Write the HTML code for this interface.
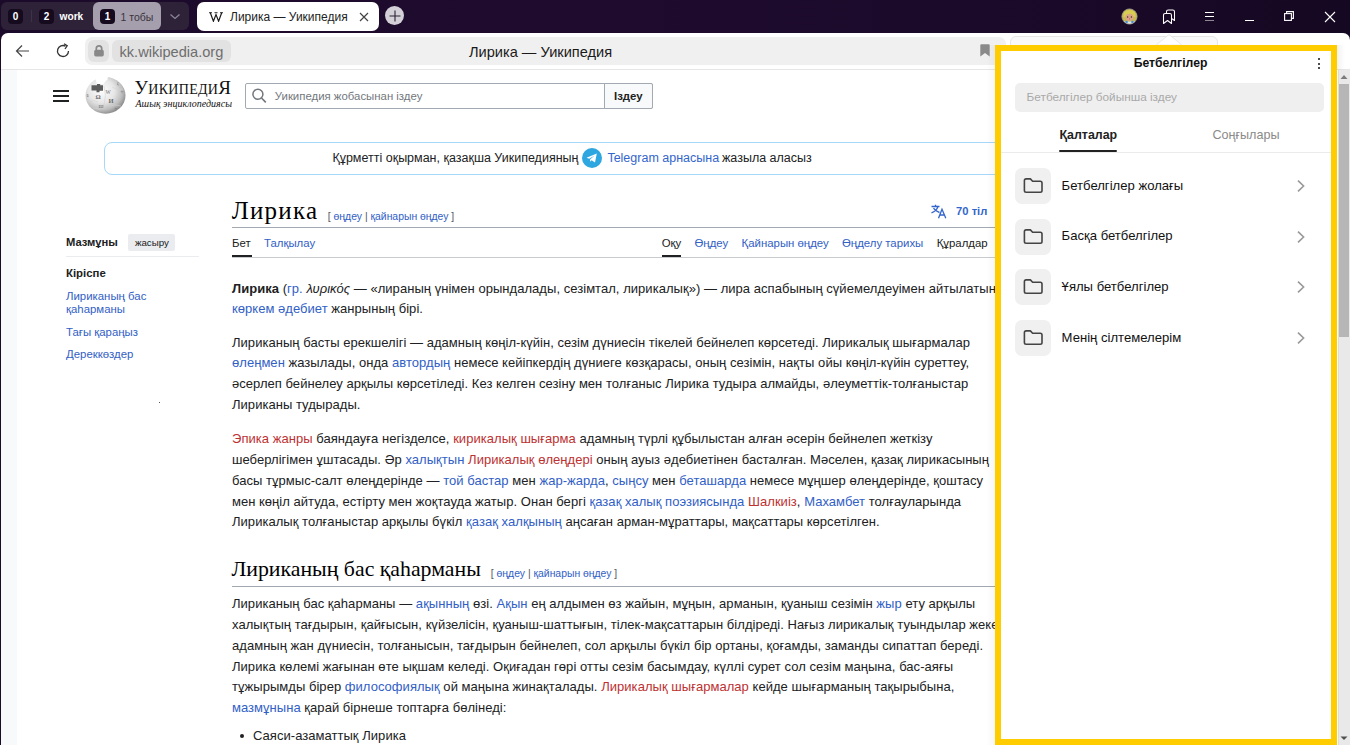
<!DOCTYPE html>
<html><head><meta charset="utf-8">
<style>
*{box-sizing:border-box;margin:0;padding:0}
html,body{width:1350px;height:745px;overflow:hidden;background:linear-gradient(to right,#1c0a2b 0%,#1e0b2e 40%,#1c0a2b 70%,#150822 100%);font-family:"Liberation Sans",sans-serif;color:#202122;position:relative}
.a{position:absolute}
a{color:#3160c6;text-decoration:none}
.rd{color:#bd3131}
.badge{position:absolute;top:9px;width:15px;height:15px;background:#160a1f;border-radius:4px;color:#fff;font-size:10px;font-weight:bold;text-align:center;line-height:16px}
.ln{position:absolute;left:232px;white-space:nowrap;font-size:13px;line-height:16px}
</style></head><body>
<!-- TAB BAR -->
<div class="a" style="left:1px;top:2px;width:188px;height:28px;background:#2e2239;border-radius:6px"></div>
<div class="badge" style="left:8px">0</div>
<div class="a" style="left:30.5px;top:10px;width:1px;height:12px;background:#3d3248"></div>
<div class="badge" style="left:39px">2</div>
<div class="a" style="left:59.5px;top:9px;color:#fff;font-size:10.2px;font-weight:bold;line-height:16px">work</div>
<svg class="a" style="left:168px;top:12px" width="14" height="9" viewBox="0 0 14 9"><path d="M2.5 2.5 L7 6.5 L11.5 2.5" fill="none" stroke="#8c8496" stroke-width="1.3"/></svg>
<div class="a" style="left:93px;top:2px;width:68px;height:28px;background:#a59fad;border-radius:6px"></div>
<div class="badge" style="left:100px">1</div>
<div class="a" style="left:120.5px;top:9px;color:#3a3340;font-size:10.5px;line-height:16px">1 тобы</div>
<div class="a" style="left:197px;top:2px;width:182px;height:28.5px;background:#fff;border-radius:7px"></div>
<svg class="a" style="left:209px;top:12px" width="14" height="10" viewBox="0 0 14 10"><path d="M1.3 0.8L4.4 9.2L7 2.6L9.6 9.2L12.7 0.8" fill="none" stroke="#1a1a1a" stroke-width="1.2" stroke-linejoin="miter"/><path d="M0 0.7H3M5.5 0.7H8.5M11 0.7H14" stroke="#1a1a1a" stroke-width="0.9"/></svg>
<div class="a" style="left:230px;top:9px;font-size:12px;line-height:16px;color:#222">Лирика — Уикипедия</div>
<svg class="a" style="left:358.5px;top:11.5px" width="10" height="10" viewBox="0 0 10 10"><path d="M1 1L9 9M9 1L1 9" stroke="#444" stroke-width="1.2"/></svg>
<div class="a" style="left:384.5px;top:5.8px;width:19.5px;height:19.5px;border-radius:50%;background:#d4d0d8"></div>
<svg class="a" style="left:384.5px;top:5.8px" width="20" height="20" viewBox="0 0 20 20"><path d="M10 4.5V15.5M4.5 10H15.5" stroke="#2a2333" stroke-width="1.1"/></svg>

<!-- right tab-bar icons -->
<svg class="a" style="left:1121px;top:8px" width="17" height="17" viewBox="0 0 17 17"><defs><clipPath id="avc"><circle cx="8.5" cy="8.5" r="7.3"/></clipPath></defs><circle cx="8.5" cy="8.5" r="7.6" fill="#c4bb4a" stroke="#a8a39a" stroke-width="0.8"/><g clip-path="url(#avc)"><path d="M3 4Q8.5 0 14 4L14.5 9H2.5Z" fill="#d8cf52"/><ellipse cx="8.5" cy="9.3" rx="4.2" ry="3.6" fill="#d9a585"/><circle cx="6.6" cy="9" r="0.7" fill="#3a2a2a"/><circle cx="10.4" cy="9" r="0.7" fill="#3a2a2a"/><circle cx="8.5" cy="10.8" r="0.6" fill="#d0507a"/><path d="M3 13.5H14V17H3Z" fill="#d8e4ee"/><circle cx="5.5" cy="14" r="1.3" fill="#4a8ad8"/><circle cx="11.5" cy="14" r="1.3" fill="#4a8ad8"/></g></svg>
<svg class="a" style="left:1160px;top:8px" width="18" height="18" viewBox="0 0 18 18"><path d="M3.5 15.5V7.2Q3.5 5.5 5.2 5.5H9.8Q11.5 5.5 11.5 7.2V15.5L7.5 12.5Z" fill="none" stroke="#fff" stroke-width="1.05" stroke-linejoin="round"/><path d="M6.5 5.5V3.8Q6.5 2 8.2 2H12.8Q14.5 2 14.5 3.8V12.5L11.5 10.5" fill="none" stroke="#fff" stroke-width="1.05" stroke-linejoin="round"/></svg>
<div class="a" style="left:1204.5px;top:11.7px;width:9px;height:1.3px;background:#fff"></div>
<div class="a" style="left:1204.5px;top:15.7px;width:9px;height:1.3px;background:#fff"></div>
<div class="a" style="left:1204.5px;top:19.5px;width:9px;height:1.5px;background:#8e8796"></div>
<div class="a" style="left:1244.7px;top:20px;width:9.5px;height:1.2px;background:#fff"></div>
<svg class="a" style="left:1283px;top:10px" width="12" height="12" viewBox="0 0 12 12"><rect x="1.6" y="3.6" width="6.8" height="6.8" fill="none" stroke="#fff" stroke-width="1.1"/><path d="M3.6 3.6V1.6H10.4V8.4H8.4" fill="none" stroke="#fff" stroke-width="1.1"/></svg>
<svg class="a" style="left:1323.5px;top:10.5px" width="12" height="12" viewBox="0 0 12 12"><path d="M1 1L11 11M11 1L1 11" stroke="#fff" stroke-width="1.1"/></svg>

<!-- WINDOW -->
<div class="a" style="left:1px;top:32.5px;width:1349px;height:713px;background:#fff;border-radius:7px 7px 0 0"></div>
<div class="a" style="left:1px;top:69px;width:1349px;height:1px;background:#e6e6e6"></div>
<svg class="a" style="left:14px;top:43px" width="16" height="16" viewBox="0 0 16 16"><path d="M15 8H2.5M8 2.5L2.5 8L8 13.5" fill="none" stroke="#444" stroke-width="1.2"/></svg>
<svg class="a" style="left:55px;top:43px" width="16" height="16" viewBox="0 0 16 16"><path d="M13.5 8A5.5 5.5 0 1 1 10.5 3.1" fill="none" stroke="#333" stroke-width="1.3"/><path d="M9 0.8L12.2 2.8L10 6" fill="none" stroke="#333" stroke-width="1.3"/></svg>
<div class="a" style="left:84.5px;top:36.5px;width:921px;height:28.5px;background:#f0f0f0;border-radius:7px"></div>
<div class="a" style="left:88px;top:40px;width:21px;height:22px;background:#e2e2e2;border-radius:6px"></div>
<svg class="a" style="left:92.5px;top:44px" width="12" height="14" viewBox="0 0 12 14"><rect x="1.2" y="5.8" width="9.6" height="6.6" rx="1.6" fill="#888"/><path d="M3.3 6.5V4.6A2.7 2.7 0 0 1 8.7 4.6V6.5" fill="none" stroke="#888" stroke-width="1.7"/></svg>
<div class="a" style="left:112.4px;top:40px;width:119px;height:22px;background:#e2e2e2;border-radius:6px"></div>
<div class="a" style="left:119.5px;top:42.5px;font-size:14.6px;line-height:19px;color:#6e6e6e">kk.wikipedia.org</div>
<div class="a" style="left:469px;top:43px;font-size:14.6px;line-height:19px;color:#1a1a1a">Лирика — Уикипедия</div>
<svg class="a" style="left:979.5px;top:44px" width="10" height="13" viewBox="0 0 10 13"><path d="M0.3 1.3Q0.3 0.3 1.3 0.3H8.7Q9.7 0.3 9.7 1.3V12.5L5 9L0.3 12.5Z" fill="#8a8a8a"/></svg>

<!-- PAGE -->
<div class="a" style="left:1px;top:70px;width:16px;height:675px;background:#f8f9fa"></div>
<div class="a" style="left:53px;top:90px;width:15.5px;height:2px;background:#202122"></div>
<div class="a" style="left:53px;top:95px;width:15.5px;height:2px;background:#202122"></div>
<div class="a" style="left:53px;top:100px;width:15.5px;height:2px;background:#202122"></div>
<svg class="a" style="left:84px;top:76px" width="44" height="40" viewBox="0 0 44 40"><defs><radialGradient id="gg" cx="0.4" cy="0.38" r="0.65"><stop offset="0" stop-color="#fdfdfd"/><stop offset="0.5" stop-color="#e6e6e6"/><stop offset="0.8" stop-color="#bdbdbd"/><stop offset="1" stop-color="#8a8a8a"/></radialGradient></defs>
<ellipse cx="21.5" cy="19.4" rx="20" ry="18.3" fill="url(#gg)"/>
<path d="M11.5 0.5L24 0.5L23.5 3.5Q21 5 19.5 8L13 8.5Q12 5 11.5 0.5Z" fill="#fff"/>
<path d="M7.5 9.3H13V8H16.2V9.2H19V14.8H15.5V16.3H12.5V14.6H7.5Z" fill="#5c5c5c"/>
<g font-family="Liberation Serif,serif" fill="#6a6a6a"><text x="11.5" y="23" font-size="6.5" font-weight="bold">Ω</text><text x="21.5" y="17.5" font-size="5.5">W</text><text x="24.5" y="27" font-size="6.5" font-weight="bold">И</text><text x="14.5" y="31.5" font-size="5">Ш</text><text x="2.5" y="21" font-size="4">Б</text><text x="33" y="8.5" font-size="4">ζ</text><text x="36" y="17" font-size="4">ャ</text><text x="30" y="34" font-size="4">ヶ</text></g>
<path d="M4 26Q10 23 14 26M20 10Q23 19 20 29M28 11Q33 15 39 13M9 32Q15 34 21 32M26 30Q31 28 37 30" fill="none" stroke="#d2d2d2" stroke-width="0.6"/></svg>
<div class="a" style="left:134.5px;top:77.5px;font-family:'Liberation Serif',serif;font-size:19px;line-height:20px;color:#111;letter-spacing:0.3px;white-space:nowrap">У<span style="font-size:14px">ИКИПЕДИ</span>Я</div>
<div class="a" style="left:135.5px;top:98px;font-family:'Liberation Serif',serif;font-style:italic;font-size:10px;line-height:12px;color:#111">Ашық энциклопедиясы</div>
<div class="a" style="left:244.6px;top:82.6px;width:408px;height:26px;border:1px solid #a2a9b1;border-radius:2px;background:#fff"></div>
<svg class="a" style="left:250px;top:87px" width="18" height="18" viewBox="0 0 18 18"><circle cx="7.9" cy="7.3" r="5" fill="none" stroke="#72777d" stroke-width="1.5"/><path d="M11.5 11L15.8 15.4" stroke="#72777d" stroke-width="1.6"/></svg>
<div class="a" style="left:274.8px;top:89px;font-size:11.4px;line-height:14px;color:#72777d;white-space:nowrap">Уикипедия жобасынан іздеу</div>
<div class="a" style="left:604px;top:82.6px;width:48.6px;height:26px;border:1px solid #a2a9b1;border-radius:0 2px 2px 0;background:#f8f9fa;font-size:11.4px;font-weight:bold;line-height:24px;text-align:center;color:#202122">Іздеу</div>

<div class="a" style="left:104.4px;top:142.4px;width:1230px;height:33px;border:1px solid #a7d7f9;border-radius:8px"></div>
<div class="a" style="left:332.4px;top:150px;font-size:12.5px;line-height:16px;white-space:nowrap">Құрметті оқырман, қазақша Уикипедияның</div>
<div class="a" style="left:582.2px;top:148.3px;width:20px;height:20px;border-radius:50%;background:#2ea6df"></div>
<svg class="a" style="left:582.2px;top:148.3px" width="20" height="20" viewBox="0 0 20 20"><path d="M4.5 9.8L14.8 5.6L13 14.6L9.6 12.2L8 13.8L8.2 11.2L12.6 7.4L7.2 10.8Z" fill="#fff"/></svg>
<div class="a" style="left:607.4px;top:150px;font-size:12.5px;line-height:16px;white-space:nowrap;color:#3366cc">Telegram арнасына</div>
<div class="a" style="left:722px;top:150px;font-size:12.5px;line-height:16px;white-space:nowrap">жазыла аласыз</div>

<!-- ARTICLE -->
<div class="a" style="left:232px;top:278.5px;font-size:13px;line-height:20.8px;white-space:nowrap;letter-spacing:0.04px"><b>Лирика</b> (<a>гр.</a> <i>λυρικός</i> — «лираның үнімен орындалады, сезімтал, лирикалық») — лира аспабының сүйемелдеуімен айтылатын<br><a>көркем әдебиет</a> жанрының бірі.</div>
<div class="a" style="left:232px;top:332.7px;font-size:13px;line-height:20.8px;white-space:nowrap;letter-spacing:0.04px">Лириканың басты ерекшелігі — адамның көңіл-күйін, сезім дүниесін тікелей бейнелеп көрсетеді. Лирикалық шығармалар<br><a>өлеңмен</a> жазылады, онда <a>автордың</a> немесе кейіпкердің дүниеге көзқарасы, оның сезімін, нақты ойы көңіл-күйін суреттеу,<br>әсерлеп бейнелеу арқылы көрсетіледі. Кез келген сезіну мен толғаныс Лирика тудыра алмайды, әлеуметтік-толғаныстар<br>Лириканы тудырады.</div>
<div class="a" style="left:232px;top:429.2px;font-size:13px;line-height:20.8px;white-space:nowrap;letter-spacing:0.04px"><a class="rd">Эпика жанры</a> баяндауға негізделсе, <a class="rd">кирикалық шығарма</a> адамның түрлі құбылыстан алған әсерін бейнелеп жеткізу<br>шеберлігімен ұштасады. Әр <a>халықтын</a> <a class="rd">Лирикалық өлеңдері</a> оның ауыз әдебиетінен басталған. Мәселен, қазақ лирикасының<br>басы тұрмыс-салт өлеңдерінде — <a>той бастар</a> мен <a>жар-жарда</a>, <a>сыңсу</a> мен <a>беташарда</a> немесе мұңшер өлеңдерінде, қоштасу<br>мен көңіл айтуда, естірту мен жоқтауда жатыр. Онан бергі <a>қазақ халық поэзиясында</a> <a class="rd">Шалкиіз</a>, <a>Махамбет</a> толғауларында<br>Лирикалық толғаныстар арқылы бүкіл <a>қазақ халқының</a> аңсаған арман-мұраттары, мақсаттары көрсетілген.</div>
<div class="a" style="left:232px;top:594.3px;font-size:13px;line-height:20.8px;white-space:nowrap;letter-spacing:0.04px">Лириканың бас қаһарманы — <a>ақынның</a> өзі. <a>Ақын</a> ең алдымен өз жайын, мұңын, арманын, қуаныш сезімін <a>жыр</a> ету арқылы<br>халықтың тағдырын, қайғысын, күйзелісін, қуаныш-шаттығын, тілек-мақсаттарын білдіреді. Нағыз лирикалық туындылар жеке<br>адамның жан дүниесін, толғанысын, тағдырын бейнелеп, сол арқылы бүкіл бір ортаны, қоғамды, заманды сипаттап береді.<br>Лирика көлемі жағынан өте ықшам келеді. Оқиғадан гөрі отты сезім басымдау, күллі сурет сол сезім маңына, бас-аяғы<br>тұжырымды бірер <a>философиялық</a> ой маңына жинақталады. <a class="rd">Лирикалық шығармалар</a> кейде шығарманың тақырыбына,<br><a>мазмұнына</a> қарай бірнеше топтарға бөлінеді:</div>
<div class="a" style="left:240px;top:734.0px;width:4px;height:4px;border-radius:50%;background:#202122"></div>
<div class="a" style="left:253px;top:725.6px;font-size:13px;line-height:20.8px;white-space:nowrap;letter-spacing:0.04px">Саяси-азаматтық Лирика</div>
<div class="a" style="left:231.7px;top:194.9px;font-size:25.00px;line-height:31px;white-space:nowrap;font-family:'Liberation Serif',serif;letter-spacing:1.25px;color:#000">Лирика</div>
<div class="a" style="left:327.8px;top:210.2px;font-size:10.40px;line-height:13px;white-space:nowrap;"><span style="color:#54595d">[</span> <a>өңдеу</a> <span style="color:#54595d">|</span> <a>қайнарын өңдеу</a> <span style="color:#54595d">]</span></div>
<div class="a" style="left:232px;top:226.5px;width:800px;height:1px;background:#a2a9b1"></div>
<svg class="a" style="left:930px;top:204px" width="18" height="15" viewBox="0 0 18 15"><path d="M1.5 2.5H9.5M5.5 0.8V2.5M8 2.5Q6.5 7 1.5 8.8M3.5 4.2Q5.5 7.5 9.5 8.5M8.5 14.2L12 5.2L15.8 14.2M9.8 11H14.2" fill="none" stroke="#3366cc" stroke-width="1.3"/></svg>
<div class="a" style="left:956.1px;top:204.0px;font-size:11.20px;line-height:14px;white-space:nowrap;font-weight:bold;color:#3366cc">70 тіл</div>
<div class="a" style="left:232.0px;top:236.2px;font-size:11.40px;line-height:14px;white-space:nowrap;">Бет</div>
<div class="a" style="left:264.0px;top:236.2px;font-size:11.40px;line-height:14px;white-space:nowrap;"><a>Талқылау</a></div>
<div class="a" style="left:232px;top:256.5px;width:800px;height:1px;background:#c8ccd1"></div>
<div class="a" style="left:232px;top:255.3px;width:19.5px;height:2px;background:#202122"></div>
<div class="a" style="left:661.7px;top:236.2px;font-size:11.40px;line-height:14px;white-space:nowrap;">Оқу</div>
<div class="a" style="left:661.5px;top:255.3px;width:19.6px;height:2px;background:#202122"></div>
<div class="a" style="left:694.5px;top:236.2px;font-size:11.40px;line-height:14px;white-space:nowrap;"><a>Өңдеу</a></div>
<div class="a" style="left:741.6px;top:236.2px;font-size:11.40px;line-height:14px;white-space:nowrap;"><a>Қайнарын өңдеу</a></div>
<div class="a" style="left:842.0px;top:236.2px;font-size:11.40px;line-height:14px;white-space:nowrap;"><a>Өңделу тарихы</a></div>
<div class="a" style="left:936.7px;top:236.2px;font-size:11.40px;line-height:14px;white-space:nowrap;">Құралдар</div>
<div class="a" style="left:66.0px;top:234.5px;font-size:11.20px;line-height:14px;white-space:nowrap;font-weight:bold">Мазмұны</div>
<div class="a" style="left:128.3px;top:233.8px;width:47.2px;height:17px;background:#eaecf0;border-radius:2px;font-size:9.75px;line-height:17px;text-align:center;color:#202122">жасыру</div>
<div class="a" style="left:66px;top:255.6px;width:133px;height:1px;background:#eaecf0"></div>
<div class="a" style="left:66.0px;top:265.6px;font-size:11.40px;line-height:14px;white-space:nowrap;font-weight:bold">Кіріспе</div>
<div class="a" style="left:66.0px;top:288.9px;font-size:11.40px;line-height:14px;white-space:nowrap;"><a>Лириканың бас</a></div>
<div class="a" style="left:66.0px;top:301.5px;font-size:11.40px;line-height:14px;white-space:nowrap;"><a>қаһарманы</a></div>
<div class="a" style="left:66.0px;top:324.9px;font-size:11.40px;line-height:14px;white-space:nowrap;"><a>Тағы қараңыз</a></div>
<div class="a" style="left:66.0px;top:347.3px;font-size:11.40px;line-height:14px;white-space:nowrap;"><a>Дереккөздер</a></div>
<div class="a" style="left:158.5px;top:401.5px;width:1px;height:1px;background:#555"></div>
<div class="a" style="left:231.5px;top:555.7px;font-size:21.80px;line-height:27px;white-space:nowrap;font-family:'Liberation Serif',serif;color:#000">Лириканың бас қаһарманы</div>
<div class="a" style="left:490.8px;top:566.7px;font-size:10.40px;line-height:13px;white-space:nowrap;"><span style="color:#54595d">[</span> <a>өңдеу</a> <span style="color:#54595d">|</span> <a>қайнарын өңдеу</a> <span style="color:#54595d">]</span></div>
<div class="a" style="left:232px;top:586px;width:800px;height:1px;background:#a2a9b1"></div>

<!-- scrollbar -->
<div class="a" style="left:1338px;top:70px;width:12px;height:675px;background:#e9e9e9;border-left:1px solid #dcdcdc"></div>
<div class="a" style="left:1339px;top:84px;width:10px;height:253px;background:#b6b6b6"></div>
<svg class="a" style="left:1338px;top:72px" width="12" height="9" viewBox="0 0 12 9"><path d="M2.5 7H9.5L6 3Z" fill="#7c7c7c"/></svg>
<svg class="a" style="left:1338px;top:734px" width="12" height="9" viewBox="0 0 12 9"><path d="M2.5 2.5H9.5L6 6Z" fill="#505050"/></svg>

<!-- POPUP -->
<div class="a" style="left:1006px;top:33px;width:330px;height:12px;background:#fff"></div>
<div class="a" style="left:1337px;top:45px;width:8px;height:25px;background:linear-gradient(to right,rgba(0,0,0,0.05),rgba(0,0,0,0))"></div>
<div class="a" style="left:1010px;top:36px;width:208px;height:14px;border:1px solid #e6e6e6;border-radius:6px;background:#f9f9f9"></div>
<svg class="a" style="left:1154px;top:33px" width="30" height="13" viewBox="0 0 30 13"><path d="M2 12L15 1.5L28 12Z" fill="#fff" stroke="#e2e2e2" stroke-width="0.8"/><path d="M1 12.5H29" stroke="#fff" stroke-width="1.5"/></svg>
<div class="a" style="left:986px;top:45px;width:9px;height:700px;background:linear-gradient(to right,rgba(0,0,0,0),rgba(0,0,0,0.035))"></div>
<div class="a" style="left:995px;top:45px;width:342px;height:700px;border:6px solid #ffcc00;background:#fff"></div>
<!-- POPUP CONTENT -->
<div class="a" style="left:1133.7px;top:56.0px;font-size:12.20px;line-height:15px;white-space:nowrap;font-weight:bold;color:#111">Бетбелгілер</div>
<div class="a" style="left:1317.9px;top:57.9px;width:2.2px;height:2.2px;border-radius:50%;background:#111"></div>
<div class="a" style="left:1317.9px;top:62.5px;width:2.2px;height:2.2px;border-radius:50%;background:#111"></div>
<div class="a" style="left:1317.9px;top:67.1px;width:2.2px;height:2.2px;border-radius:50%;background:#111"></div>
<div class="a" style="left:1014.8px;top:83.2px;width:309.7px;height:28.8px;background:#efefef;border-radius:5px"></div>
<div class="a" style="left:1026.6px;top:90.4px;font-size:11.80px;line-height:15px;white-space:nowrap;color:#a9a9a9">Бетбелгілер бойынша іздеу</div>
<div class="a" style="left:1059.5px;top:127.1px;font-size:12.40px;line-height:16px;white-space:nowrap;font-weight:bold;color:#222">Қалталар</div>
<div class="a" style="left:1059px;top:150.3px;width:58px;height:2px;background:#222;border-radius:1px"></div>
<div class="a" style="left:1001px;top:152px;width:330px;height:1px;background:#ebebeb"></div>
<div class="a" style="left:1212.4px;top:127.0px;font-size:12.60px;line-height:16px;white-space:nowrap;color:#8a8a8a">Соңғылары</div>
<div class="a" style="left:1015px;top:167.6px;width:36px;height:36px;background:#f0f0f0;border-radius:7px"></div>
<svg class="a" style="left:1015px;top:167.6px" width="36" height="36" viewBox="0 0 36 36"><path d="M9.4 12.6Q9.4 10.9 11.1 10.9H15.4L17.6 13.2H25.3Q27 13.2 27 14.9V22.5Q27 24.2 25.3 24.2H11.1Q9.4 24.2 9.4 22.5Z" fill="none" stroke="#444" stroke-width="1.6" stroke-linejoin="round"/></svg>
<div class="a" style="left:1061.6px;top:177.6px;font-size:13.10px;line-height:16px;white-space:nowrap;color:#111">Бетбелгілер жолағы</div>
<svg class="a" style="left:1294px;top:177.6px" width="14" height="16" viewBox="0 0 14 16"><path d="M4 2.6L9.6 8L4 13.4" fill="none" stroke="#999" stroke-width="1.6"/></svg>
<div class="a" style="left:1015px;top:218.5px;width:36px;height:36px;background:#f0f0f0;border-radius:7px"></div>
<svg class="a" style="left:1015px;top:218.5px" width="36" height="36" viewBox="0 0 36 36"><path d="M9.4 12.6Q9.4 10.9 11.1 10.9H15.4L17.6 13.2H25.3Q27 13.2 27 14.9V22.5Q27 24.2 25.3 24.2H11.1Q9.4 24.2 9.4 22.5Z" fill="none" stroke="#444" stroke-width="1.6" stroke-linejoin="round"/></svg>
<div class="a" style="left:1061.6px;top:228.4px;font-size:13.10px;line-height:16px;white-space:nowrap;color:#111">Басқа бетбелгілер</div>
<svg class="a" style="left:1294px;top:228.5px" width="14" height="16" viewBox="0 0 14 16"><path d="M4 2.6L9.6 8L4 13.4" fill="none" stroke="#999" stroke-width="1.6"/></svg>
<div class="a" style="left:1015px;top:269.3px;width:36px;height:36px;background:#f0f0f0;border-radius:7px"></div>
<svg class="a" style="left:1015px;top:269.3px" width="36" height="36" viewBox="0 0 36 36"><path d="M9.4 12.6Q9.4 10.9 11.1 10.9H15.4L17.6 13.2H25.3Q27 13.2 27 14.9V22.5Q27 24.2 25.3 24.2H11.1Q9.4 24.2 9.4 22.5Z" fill="none" stroke="#444" stroke-width="1.6" stroke-linejoin="round"/></svg>
<div class="a" style="left:1061.6px;top:279.3px;font-size:13.10px;line-height:16px;white-space:nowrap;color:#111">Ұялы бетбелгілер</div>
<svg class="a" style="left:1294px;top:279.3px" width="14" height="16" viewBox="0 0 14 16"><path d="M4 2.6L9.6 8L4 13.4" fill="none" stroke="#999" stroke-width="1.6"/></svg>
<div class="a" style="left:1015px;top:320.2px;width:36px;height:36px;background:#f0f0f0;border-radius:7px"></div>
<svg class="a" style="left:1015px;top:320.2px" width="36" height="36" viewBox="0 0 36 36"><path d="M9.4 12.6Q9.4 10.9 11.1 10.9H15.4L17.6 13.2H25.3Q27 13.2 27 14.9V22.5Q27 24.2 25.3 24.2H11.1Q9.4 24.2 9.4 22.5Z" fill="none" stroke="#444" stroke-width="1.6" stroke-linejoin="round"/></svg>
<div class="a" style="left:1061.6px;top:330.2px;font-size:13.10px;line-height:16px;white-space:nowrap;color:#111">Менің сілтемелерім</div>
<svg class="a" style="left:1294px;top:330.2px" width="14" height="16" viewBox="0 0 14 16"><path d="M4 2.6L9.6 8L4 13.4" fill="none" stroke="#999" stroke-width="1.6"/></svg>
</body></html>
